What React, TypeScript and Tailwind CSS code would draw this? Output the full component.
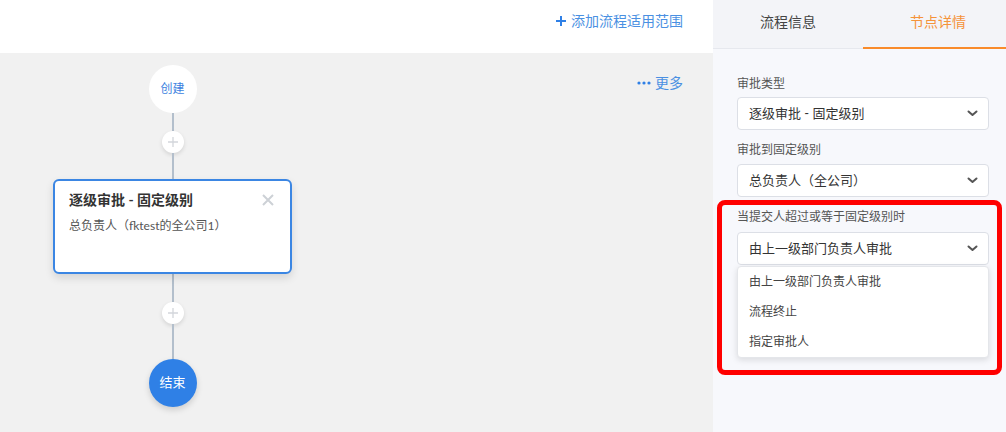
import React from "react";

const font = { fontFamily: 'Lato, "Noto Sans CJK SC", sans-serif' };

function Chevron() {
  return (
    <svg width="11" height="7" viewBox="0 0 11 7" className="shrink-0">
      <path d="M1.5 1.5 L5.5 5 L9.5 1.5" fill="none" stroke="#555" strokeWidth="2" strokeLinecap="round" strokeLinejoin="round" />
    </svg>
  );
}

function Select({ value }: { value: string }) {
  return (
    <div className="h-[33px] bg-white border border-[#dcdfe6] rounded-[4px] flex items-center justify-between pl-[11px] pr-[10px] text-[13px] text-[#333]">
      <span>{value}</span>
      <Chevron />
    </div>
  );
}

function Plus() {
  return (
    <div className="w-[22px] h-[22px] rounded-full bg-white shadow-[0_2px_4px_rgba(0,0,0,0.12)] flex items-center justify-center shrink-0">
      <svg width="12" height="12" viewBox="0 0 12 12">
        <path d="M6 1 V11 M1 6 H11" stroke="#d3d6db" strokeWidth="1.3" />
      </svg>
    </div>
  );
}

function Line({ h }: { h: string }) {
  return <div className={`w-[2px] bg-[#b3bfcc] ${h}`} />;
}

export default function App() {
  return (
    <div className="w-[1006px] h-[432px] flex overflow-hidden" style={font}>
      {/* left */}
      <div className="w-[713px] shrink-0 flex flex-col">
        <div className="h-[53px] bg-white flex items-start justify-end pr-[30px] pt-[10px]">
          <div className="flex items-center gap-[4px] text-[14px] text-[#4a90e2]">
            <svg width="12" height="12" viewBox="0 0 12 12">
              <path d="M6 1 V11 M1 6 H11" stroke="#2f80e6" strokeWidth="2" />
            </svg>
            <span>添加流程适用范围</span>
          </div>
        </div>
        <div className="flex-1 bg-[#f1f1f1] relative pl-[53px]">
          <div className="absolute right-[30px] top-[19px] flex items-center gap-[4px] text-[14px] text-[#4a90e2]">
            <svg width="14" height="4" viewBox="0 0 14 4">
              <circle cx="2" cy="2" r="1.6" fill="#2f80e6" />
              <circle cx="7" cy="2" r="1.6" fill="#2f80e6" />
              <circle cx="12" cy="2" r="1.6" fill="#2f80e6" />
            </svg>
            <span>更多</span>
          </div>
          <div className="w-[239px] flex flex-col items-center pt-[12px]">
            <div className="w-[48px] h-[48px] rounded-full bg-white flex items-center justify-center text-[12px] text-[#3b82e0]">
              创建
            </div>
            <Line h="h-[18px]" />
            <Plus />
            <Line h="h-[26px]" />
            <div className="w-[239px] h-[95px] bg-white border-2 border-[#3b86e3] rounded-[6px] shadow-[0_4px_8px_rgba(0,0,0,0.12)] px-[14px] pt-[9px] relative">
              <div className="text-[14px] font-bold text-[#333] leading-[20px]">逐级审批 - 固定级别</div>
              <div className="text-[12px] text-[#555] mt-[8px] leading-[16px]">总负责人（fktest的全公司1）</div>
              <svg className="absolute right-[16px] top-[13px]" width="12" height="12" viewBox="0 0 12 12">
                <path d="M1 1 L11 11 M11 1 L1 11" stroke="#cdd1d6" strokeWidth="2" />
              </svg>
            </div>
            <Line h="h-[28px]" />
            <Plus />
            <Line h="h-[35px]" />
            <div className="w-[48px] h-[48px] rounded-full bg-[#2f80e6] shadow-[0_3px_6px_rgba(0,0,0,0.15)] flex items-center justify-center text-[13px] text-white">
              结束
            </div>
          </div>
        </div>
      </div>
      {/* right */}
      <div className="w-[300px] shrink-0 bg-[#f7f8fc] flex flex-col relative">
        <div className="h-[49px] bg-[#f3f4f8] border-b border-[#e6e8ee] flex">
          <div className="w-[150px] flex items-center justify-center pb-[6px] text-[14px] text-[#444]">流程信息</div>
          <div className="w-[150px] flex items-center justify-center pb-[6px] text-[14px] text-[#f5933a] relative">
            节点详情
            <div className="absolute left-0 right-0 bottom-[-1px] h-[2px] bg-[#f98b2b]" />
          </div>
        </div>
        <div className="px-[24px] pt-[27px] flex flex-col">
          <div className="text-[12px] text-[#555] leading-[16px] mb-[5px]">审批类型</div>
          <Select value="逐级审批 - 固定级别" />
          <div className="text-[12px] text-[#555] leading-[16px] mt-[12px] mb-[6px]">审批到固定级别</div>
          <Select value="总负责人（全公司）" />
          <div className="text-[12px] text-[#555] leading-[16px] mt-[12px] mb-[7px]">当提交人超过或等于固定级别时</div>
          <Select value="由上一级部门负责人审批" />
          <div className="mt-[1px] bg-white border border-[#e4e6ea] rounded-[4px] shadow-[0_2px_6px_rgba(0,0,0,0.12)] flex flex-col text-[12px] text-[#444]">
            <div className="h-[30px] flex items-center px-[11px]">由上一级部门负责人审批</div>
            <div className="h-[30px] flex items-center px-[11px]">流程终止</div>
            <div className="h-[30px] flex items-center px-[11px]">指定审批人</div>
          </div>
        </div>
        <div className="absolute left-[4px] top-[200px] w-[285px] h-[175px] border-[5px] border-[#ff0000] rounded-[8px] pointer-events-none" />
      </div>
    </div>
  );
}
